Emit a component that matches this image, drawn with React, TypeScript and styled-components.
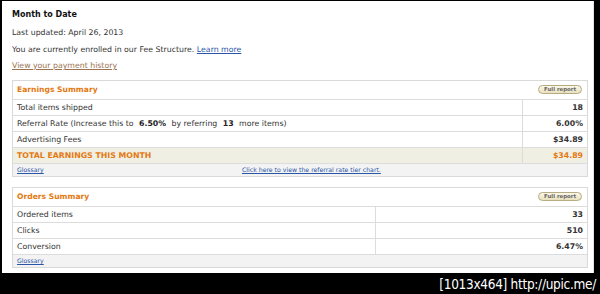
import React from "react";
import styled, { createGlobalStyle } from "styled-components";

const Global = createGlobalStyle`
  html, body { margin: 0; padding: 0; background: #000; }
  body { font-family: "DejaVu Sans", Verdana, sans-serif; }
  * { box-sizing: border-box; }
`;

const Frame = styled.div`
  width: 600px;
  height: 294px;
  background: #000;
  display: flex;
  flex-direction: column;
  overflow: hidden;
`;

const Sheet = styled.main`
  margin: 1px 6px 0 2px;
  height: 272px;
  background: #fff;
  padding: 6px 5px 0 10px;
  border-right: 1px solid #e2e2e2;
`;

const Title = styled.h1`
  margin: 0 0 2px;
  font-size: 8px;
  line-height: 16px;
  font-weight: bold;
  color: #111;
`;

const Para = styled.p`
  margin: 0;
  font-size: 7.8px;
  line-height: 16.5px;
  color: #333;
`;

const Link = styled.a<{ $tone?: "blue" | "brown" }>`
  color: ${(p) => (p.$tone === "brown" ? "#9b7350" : "#2a56a8")};
  text-decoration: underline;
  cursor: pointer;
`;

const Box = styled.section<{ $gap: number }>`
  margin-top: ${(p) => p.$gap}px;
  border: 1px solid #d9d9d9;
`;

const Table = styled.table`
  width: 100%;
  border-collapse: collapse;
  font-size: 7.8px;
  color: #333;
`;

const HeadCell = styled.td`
  height: 19px;
  padding: 0 5px 0 4px;
  border-bottom: 1px solid #dcdcdc;
`;

const HeadInner = styled.div`
  display: flex;
  align-items: center;
  justify-content: space-between;
`;

const BoxTitle = styled.span`
  color: #e47911;
  font-weight: bold;
  font-size: 7.6px;
`;

const Pill = styled.button`
  height: 9px;
  padding: 0 5px;
  border: 1px solid #b7ab82;
  border-radius: 6px;
  background: linear-gradient(#fbf8ea, #e9e0bd);
  font-family: "DejaVu Sans", Verdana, sans-serif;
  font-size: 5.4px;
  font-weight: bold;
  color: #666;
  line-height: 7px;
  display: inline-flex;
  align-items: center;
`;

const Row = styled.tr<{ $total?: boolean }>`
  background: ${(p) => (p.$total ? "#efefe4" : "#fff")};
  color: ${(p) => (p.$total ? "#e47911" : "#333")};
  font-weight: ${(p) => (p.$total ? "bold" : "normal")};
`;

const Label = styled.td`
  height: 16px;
  padding: 0 4px;
  border-bottom: 1px solid #dcdcdc;
  white-space: nowrap;
`;

const Value = styled.td<{ $w: number }>`
  width: ${(p) => p.$w}px;
  height: 16px;
  padding: 0 4px;
  text-align: right;
  font-weight: bold;
  border-bottom: 1px solid #dcdcdc;
  border-left: 1px solid #dcdcdc;
`;

const Strong = styled.b`
  margin: 0 3px;
  color: #222;
`;

const FootCell = styled.td`
  height: 12px;
  padding: 0 4px;
  background: #f3f3f3;
`;

const FootInner = styled.div`
  display: grid;
  grid-template-columns: 225px auto 1fr;
  align-items: center;
  font-size: 6.2px;
`;

const Watermark = styled.footer`
  flex: 1;
  display: flex;
  justify-content: flex-end;
  align-items: center;
  padding: 1px 4px 0 0;
  color: #fff;
  font-family: "DejaVu Sans Condensed", "DejaVu Sans", sans-serif;
  font-size: 13.5px;
  letter-spacing: -0.3px;
`;

type Item = { label: React.ReactNode; value: string; total?: boolean };

const Summary: React.FC<{
  title: string;
  valueWidth: number;
  gap: number;
  items: Item[];
  chartLink?: boolean;
}> = ({ title, valueWidth, gap, items, chartLink }) => (
  <Box $gap={gap}>
    <Table>
      <tbody>
        <tr>
          <HeadCell colSpan={2}>
            <HeadInner>
              <BoxTitle>{title}</BoxTitle>
              <Pill>Full report</Pill>
            </HeadInner>
          </HeadCell>
        </tr>
        {items.map((it, i) => (
          <Row key={i} $total={it.total}>
            <Label>{it.label}</Label>
            <Value $w={valueWidth}>{it.value}</Value>
          </Row>
        ))}
        <tr>
          <FootCell colSpan={2}>
            <FootInner>
              <Link>Glossary</Link>
              {chartLink ? <Link>Click here to view the referral rate tier chart.</Link> : <span />}
            </FootInner>
          </FootCell>
        </tr>
      </tbody>
    </Table>
  </Box>
);

export default function App() {
  return (
    <>
      <Global />
      <Frame>
        <Sheet>
          <Title>Month to Date</Title>
          <Para>Last updated: April 26, 2013</Para>
          <Para>
            You are currently enrolled in our Fee Structure. <Link>Learn more</Link>
          </Para>
          <Para>
            <Link $tone="brown">View your payment history</Link>
          </Para>
          <Summary
            title="Earnings Summary"
            valueWidth={65}
            gap={5}
            chartLink
            items={[
              { label: "Total items shipped", value: "18" },
              {
                label: (
                  <>
                    Referral Rate (Increase this to <Strong>6.50%</Strong> by referring <Strong>13</Strong> more items)
                  </>
                ),
                value: "6.00%",
              },
              { label: "Advertising Fees", value: "$34.89" },
              { label: "TOTAL EARNINGS THIS MONTH", value: "$34.89", total: true },
            ]}
          />
          <Summary
            title="Orders Summary"
            valueWidth={212}
            gap={10}
            items={[
              { label: "Ordered items", value: "33" },
              { label: "Clicks", value: "510" },
              { label: "Conversion", value: "6.47%" },
            ]}
          />
        </Sheet>
        <Watermark>[1013x464] http://upic.me/</Watermark>
      </Frame>
    </>
  );
}
